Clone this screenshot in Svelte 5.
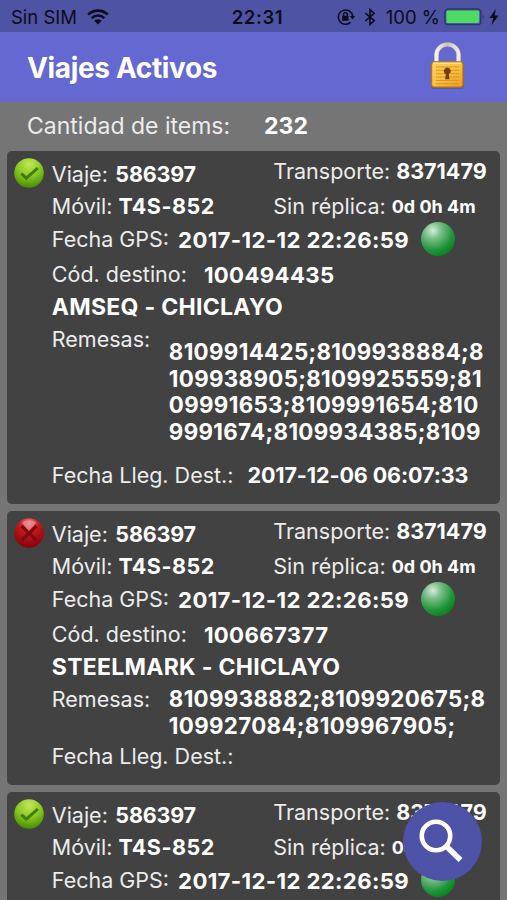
<script>
  const trips = [
    {
      ok: true,
      viaje: "586397",
      transporte: "8371479",
      movil: "T4S-852",
      replica: "0d 0h 4m",
      gps: "2017-12-12 22:26:59",
      destino: "100494435",
      nombre: "AMSEQ - CHICLAYO",
      remesas: ["8109914425;8109938884;8", "109938905;8109925559;81", "09991653;8109991654;810", "9991674;8109934385;8109"],
      llegada: "2017-12-06 06:07:33",
    },
    {
      ok: false,
      viaje: "586397",
      transporte: "8371479",
      movil: "T4S-852",
      replica: "0d 0h 4m",
      gps: "2017-12-12 22:26:59",
      destino: "100667377",
      nombre: "STEELMARK - CHICLAYO",
      remesas: ["8109938882;8109920675;8", "109927084;8109967905;"],
      llegada: "",
    },
    {
      ok: true,
      viaje: "586397",
      transporte: "8371479",
      movil: "T4S-852",
      replica: "0d 0h 4m",
      gps: "2017-12-12 22:26:59",
    },
  ];
</script>

<div class="screen">
  <div class="status-bar">
    <div class="carrier">
      <span>Sin SIM</span>
      <svg class="wifi" viewBox="0 0 22 16">
        <path d="M1.2 5.6a14 14 0 0 1 19.6 0" />
        <path d="M4.7 9.1a9 9 0 0 1 12.6 0" />
        <path class="fill" d="M11 15.6 7.2 11.8a5.4 5.4 0 0 1 7.6 0z" />
      </svg>
    </div>
    <span class="clock">22:31</span>
    <div class="indicators">
      <svg class="rotation" viewBox="0 0 18 18">
        <path d="M13.6 14.3A7.2 7.2 0 1 1 15.7 8" />
        <path class="fill" d="M13 8h5l-2.5 3.4z" />
        <rect class="fill" x="5.2" y="7.8" width="6.4" height="5" rx=".6" />
        <path class="shackle" d="M6.5 8V6.4a1.9 1.9 0 0 1 3.8 0V8" />
      </svg>
      <svg class="bluetooth" viewBox="0 0 12 18">
        <path d="M1.3 5 10.2 12.6 6 16.5V1.5l4.2 3.9L1.3 13" />
      </svg>
      <span class="percent">100 %</span>
      <svg class="battery" viewBox="0 0 42 18">
        <rect class="shell" x=".8" y="1" width="36" height="15.6" rx="3.2" />
        <rect class="charge" x="2.4" y="2.6" width="32.8" height="12.4" rx="1.5" />
        <path class="tip" d="M38.6 6.3q2.4 2.5 0 5z" />
      </svg>
      <svg class="bolt" viewBox="0 0 10 16">
        <path d="M7 0 .5 9h3.7L2.5 16 9.5 6.4H5.6z" />
      </svg>
    </div>
  </div>

  <header>
    <h1>Viajes Activos</h1>
    <svg class="lock" viewBox="0 0 38 50" preserveAspectRatio="none">
      <defs>
        <linearGradient id="gold" x1="0" y1="0" x2="1" y2="1">
          <stop offset="0" stop-color="#ffd05a" />
          <stop offset=".5" stop-color="#fbc144" />
          <stop offset="1" stop-color="#ee9c1c" />
        </linearGradient>
        <linearGradient id="steel" x1="0" x2="1">
          <stop offset="0" stop-color="#f2f2f2" />
          <stop offset=".5" stop-color="#c4c4c4" />
          <stop offset="1" stop-color="#ededed" />
        </linearGradient>
      </defs>
      <rect x="3" y="21" width="33" height="28" rx="3" fill="#4b4585" opacity=".5" />
      <path d="M8.5 23V13.5a11 11 0 0 1 22 0V23" fill="none" stroke="#85858c" stroke-width="5.2" />
      <path d="M8.5 23V13.5a11 11 0 0 1 22 0V23" fill="none" stroke="url(#steel)" stroke-width="4" />
      <rect x="3.6" y="20.6" width="31.4" height="26.4" rx="2.5" fill="url(#gold)" stroke="#b47413" stroke-width="1.2" />
      <path d="M5 22.3h28.4" stroke="#ffe38c" stroke-width="1.2" />
      <path d="M8 26h23M8 29.5h23M8 33h23M8 36.5h23M8 40h23M8 43.5h23" stroke="#d5942a" stroke-width="1" />
      <path d="M19.3 26.6a3.6 3.6 0 0 1 1.5 6.8l.7 5.3h-4.4l.7-5.3a3.6 3.6 0 0 1 1.5-6.8z" fill="#7a3e0a" />
    </svg>
  </header>

  <div class="summary">
    <span>Cantidad de items:</span>
    <b>232</b>
  </div>

  <main>
    {#each trips as trip}
      <article>
        <svg class="state" viewBox="0 0 32 32">
          <defs>
            <radialGradient id="green" cx=".5" cy=".2" r=".85">
              <stop offset="0" stop-color="#c4e858" />
              <stop offset=".5" stop-color="#86c622" />
              <stop offset="1" stop-color="#3f8500" />
            </radialGradient>
            <radialGradient id="red" cx=".5" cy=".15" r=".85">
              <stop offset="0" stop-color="#ee7575" />
              <stop offset=".4" stop-color="#c01a20" />
              <stop offset="1" stop-color="#850208" />
            </radialGradient>
          </defs>
          {#if trip.ok}
            <circle cx="16" cy="16" r="14.8" fill="url(#green)" />
            <path d="m8.3 16.6 5 4.6L24.8 11" fill="none" stroke="#3f7d12" stroke-width="3" />
          {:else}
            <circle cx="16" cy="16" r="14.8" fill="url(#red)" />
            <path d="m8.5 9 15 14.5m0-14.5-15 14.5" stroke="#800a10" stroke-width="3.2" />
            <path d="M9 5.5a12 12 0 0 1 14 0L16 14z" fill="#f4a0a0" opacity=".6" />
          {/if}
        </svg>
        <div class="details">
          <div class="row">
            <div class="left viaje"><span>Viaje:</span><b>{trip.viaje}</b></div>
            <div class="right raised"><span>Transporte:</span><b>{trip.transporte}</b></div>
          </div>
          <div class="row">
            <div class="left movil"><span>Móvil:</span><b>{trip.movil}</b></div>
            <div class="right"><span>Sin réplica:</span><b class="small">{trip.replica}</b></div>
          </div>
          <div class="row gps">
            <span>Fecha GPS:</span><b>{trip.gps}</b>
            <i class="signal"></i>
          </div>
          {#if trip.destino}
            <div class="row destino"><span>Cód. destino:</span><b>{trip.destino}</b></div>
            <div class="row nombre"><b>{trip.nombre}</b></div>
            <div class="remesas" class:long={trip.remesas.length > 2}>
              <span>Remesas:</span>
              <b>
                {#each trip.remesas as line}
                  <span>{line}</span>
                {/each}
              </b>
            </div>
            <div class="row llegada"><span>Fecha Lleg. Dest.:</span><b>{trip.llegada}</b></div>
          {/if}
        </div>
      </article>
    {/each}
  </main>

  <button class="search" aria-label="Buscar">
    <svg viewBox="0 0 46 46">
      <circle cx="18" cy="18" r="14.2" />
      <path class="handle" d="m28 28 14.5 14" />
    </svg>
  </button>
</div>

<style>
  :global(body) {
    background: #757575;
  }

  .screen {
    position: relative;
    height: 900px;
    overflow: hidden;
    background: #757575;
    color: #ececec;
    font-family: Inter, "Liberation Sans", sans-serif;
    font-size: 21.5px;
    white-space: nowrap;
  }

  b {
    color: #fff;
    font-weight: 700;
  }

  .status-bar {
    display: grid;
    grid-template-columns: 1fr auto 1fr;
    align-items: center;
    height: 32px;
    padding: 2px 8px 0 11px;
    box-sizing: border-box;
    background: #4e53a3;
    color: #0b0c1a;
    font-size: 18.5px;
  }

  .carrier,
  .indicators {
    display: flex;
    align-items: center;
  }

  .carrier {
    gap: 10px;
  }

  .indicators {
    justify-content: flex-end;
  }

  .status-bar svg {
    fill: none;
    stroke: #0b0c1a;
    stroke-width: 2.6;
  }

  .status-bar .fill,
  .status-bar .bolt,
  .status-bar .tip {
    fill: #0b0c1a;
    stroke: none;
  }

  .wifi {
    width: 22px;
    height: 16px;
  }

  .clock {
    padding-left: 5px;
    font-weight: 600;
    letter-spacing: 0.6px;
  }

  .status-bar .rotation {
    width: 18px;
    height: 18px;
    stroke-width: 1.5;
  }

  .status-bar .bluetooth {
    width: 12px;
    height: 18px;
    margin: 0 10px 0 9px;
    stroke-width: 1.6;
  }

  .battery {
    width: 42px;
    height: 18px;
    margin: 0 3px 0 4px;
  }

  .status-bar .shell {
    stroke: #30346f;
    stroke-width: 1.4;
  }

  .status-bar .charge {
    fill: #4cdb63;
    stroke: none;
  }

  .status-bar .tip {
    fill: #30346f;
  }

  .bolt {
    width: 10px;
    height: 16px;
  }

  header {
    display: flex;
    align-items: center;
    justify-content: space-between;
    height: 70px;
    padding: 0 41px 0 27px;
    background: #6568d0;
  }

  h1 {
    margin: 2px 0 0;
    color: #fff;
    font-size: 28px;
    font-weight: 700;
    letter-spacing: -0.35px;
  }

  .lock {
    width: 38px;
    height: 48px;
    margin-bottom: 3px;
  }

  .summary {
    display: flex;
    align-items: center;
    gap: 34px;
    height: 49px;
    padding: 0 0 1px 27px;
    box-sizing: border-box;
    font-size: 23px;
  }

  article {
    display: flex;
    width: 493px;
    margin: 0 0 7px 7.3px;
    padding: 7px 0 13px 6px;
    box-sizing: border-box;
    border-radius: 5px;
    background: #424242;
  }

  .state {
    flex: none;
    width: 32px;
    height: 32px;
    margin: -1px 6.5px 0 0;
  }

  .row {
    display: flex;
    align-items: center;
    height: 32px;
  }

  .left {
    display: flex;
    width: 221.5px;
  }

  .right {
    display: flex;
    align-items: center;
    gap: 6px;
  }

  .raised {
    margin-top: -6px;
  }

  .small {
    padding-top: 1px;
    font-size: 18px;
  }

  .viaje {
    gap: 7.5px;
  }

  .viaje b {
    letter-spacing: -0.2px;
  }

  .movil {
    gap: 6px;
  }

  .movil b {
    letter-spacing: 0.5px;
  }

  .gps {
    gap: 9px;
    height: 34px;
  }

  .gps b,
  .destino b {
    font-size: 22.2px;
    letter-spacing: 0.35px;
  }

  .signal {
    width: 34px;
    height: 34px;
    margin-left: 3px;
    border-radius: 50%;
    background: radial-gradient(circle at 35% 25%, #d5ecd9 0, #79bd88 25%, #20953c 58%, #007a0c 90%);
  }

  .destino {
    gap: 17px;
    height: 36px;
  }

  .nombre {
    height: 30px;
    font-size: 23px;
    letter-spacing: 0.28px;
  }

  .remesas {
    display: flex;
    align-items: center;
    height: 57px;
    line-height: 26.5px;
  }

  .remesas.long {
    height: 136px;
  }

  .remesas > span {
    align-self: flex-start;
    width: 117px;
    padding-top: 4px;
  }

  .remesas b {
    padding-top: 4px;
    font-size: 22.3px;
    letter-spacing: 0.35px;
  }

  .remesas b span {
    display: block;
  }

  .llegada {
    gap: 14px;
    height: 33px;
  }

  .llegada b {
    letter-spacing: -0.1px;
  }

  .search {
    position: absolute;
    right: 25px;
    bottom: 19px;
    display: flex;
    align-items: center;
    justify-content: center;
    width: 79px;
    height: 79px;
    padding: 0;
    border: 0;
    border-radius: 50%;
    background: #4f53a8;
  }

  .search svg {
    width: 46px;
    height: 46px;
    margin: 0 3px 1px 0;
    fill: none;
    stroke: #fff;
    stroke-width: 4.6;
  }

  .search .handle {
    stroke-width: 5.6;
  }
</style>
